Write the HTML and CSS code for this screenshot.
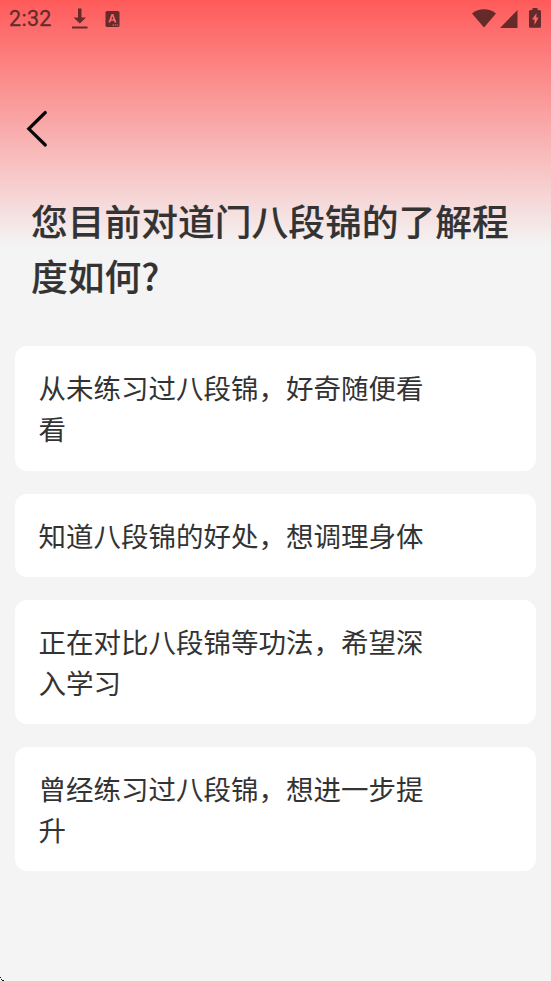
FILE: index.html
```html
<!DOCTYPE html>
<html lang="zh-CN">
<head>
<meta charset="utf-8">
<title>八段锦</title>
<link rel="stylesheet" href="styles.css">
</head>
<body>
<div class="screen">
  <header class="status">
    <span class="time">2:32</span>
    <svg class="download" width="18" height="22" viewBox="0 0 18 22"><path d="M7 0.500h3.500v9H15l-6.200 6L2.500 9.500H7zM1 18.500h15.500v2H1z"/></svg>
    <svg class="app" width="15" height="16" viewBox="0 0 15 16"><path fill-rule="evenodd" d="M2 0h11a1.500 1.500 0 0 1 1.500 1.500v13A1.500 1.500 0 0 1 13 16H2a1.500 1.500 0 0 1-1.500-1.500v-13A1.500 1.500 0 0 1 2 0zm4.500 3L3.300 11.500h2l.6-1.700h3l.6 1.700h2L8.300 3zM6.400 8.200l1-3 1 3zM7.500 13.500v1H9v-1zm2.200 0v1h1.300v-1zm2 0v1H13v-1z"/></svg>
    <span class="spacer"></span>
    <svg class="wifi" width="24" height="19" viewBox="0 0 24 19"><path d="M0 4.500Q5.500.3 12 .3t12 4.200L12 18.500z"/></svg>
    <svg class="signal" width="18" height="18" viewBox="0 0 18 18"><path d="M17.500 0v18H0z"/></svg>
    <svg class="battery" width="12" height="20" viewBox="0 0 12 20"><path fill-rule="evenodd" d="M3.500 0h5v2h2A1.500 1.500 0 0 1 12 3.500v15a1.200 1.200 0 0 1-1.200 1.200H1.200A1.200 1.200 0 0 1 0 18.500v-15A1.500 1.500 0 0 1 1.500 2h2zM7.500 5L3 11.500h2.500V17L9.500 9.500H7.200z"/></svg>
  </header>
  <button class="back" aria-label="返回"><svg width="22" height="38" viewBox="0 0 22 38"><path d="M19.300 2.500L2.800 18.800 19.300 35"/></svg></button>
  <h1>您目前对道门八段锦的了解程度如何?</h1>
  <main class="options">
    <button class="option"><span>从未练习过八段锦，好奇随便看看</span></button>
    <button class="option"><span>知道八段锦的好处，想调理身体</span></button>
    <button class="option"><span>正在对比八段锦等功法，希望深入学习</span></button>
    <button class="option"><span>曾经练习过八段锦，想进一步提升</span></button>
  </main>
  <svg class="corner" width="4" height="4" viewBox="0 0 4 4"><path d="M0 0h1v1H0zM1 2h1v1H1zM2 3h2v1H2z"/></svg>
</div>
</body>
</html>
```
FILE: styles.css
```css
* { box-sizing: border-box; }
body { margin: 0; background: #f4f4f4; }
.screen {
  position: relative;
  height: 981px;
  overflow: hidden;
  background: linear-gradient(#ff5a5a 0, #f4f4f4 246px);
  color: #333;
  font-family: "Noto Sans CJK SC", sans-serif;
}
.status { display: flex; height: 37px; align-items: center; padding: 0 10px 0 9px; fill: #652b2b; }
.time { width: 62px; font: 400 21.500px/38px Roboto, sans-serif; letter-spacing: .3px; color: #652b2b; -webkit-text-stroke: .3px #652b2b; }
.app { margin-left: 16px; }
.spacer { flex: 1; }
.signal { margin-left: 4px; }
.battery { margin: -1px 0 0 11px; }
button { display: block; border: 0; padding: 0; font: inherit; color: inherit; text-align: left; }
.back { width: 22px; height: 38px; margin: 73px 0 0 26px; background: none; }
.back svg { display: block; fill: none; stroke: #080808; stroke-width: 3.200; stroke-linecap: round; }
h1 { margin: 45px 30px 0 31px; font-size: 36.750px; line-height: 54.600px; font-weight: 500; -webkit-text-stroke: .15px #333; }
.options { display: flex; flex-direction: column; gap: 23px; margin: 44.200px 15px 0; }
.option { padding: 21.100px 23.500px; border-radius: 12px; background: #fff; font-size: 27.500px; line-height: 41px; }
.option span { display: block; width: 390px; }
.corner { position: absolute; left: 0; bottom: 0; fill: #111; }
```
